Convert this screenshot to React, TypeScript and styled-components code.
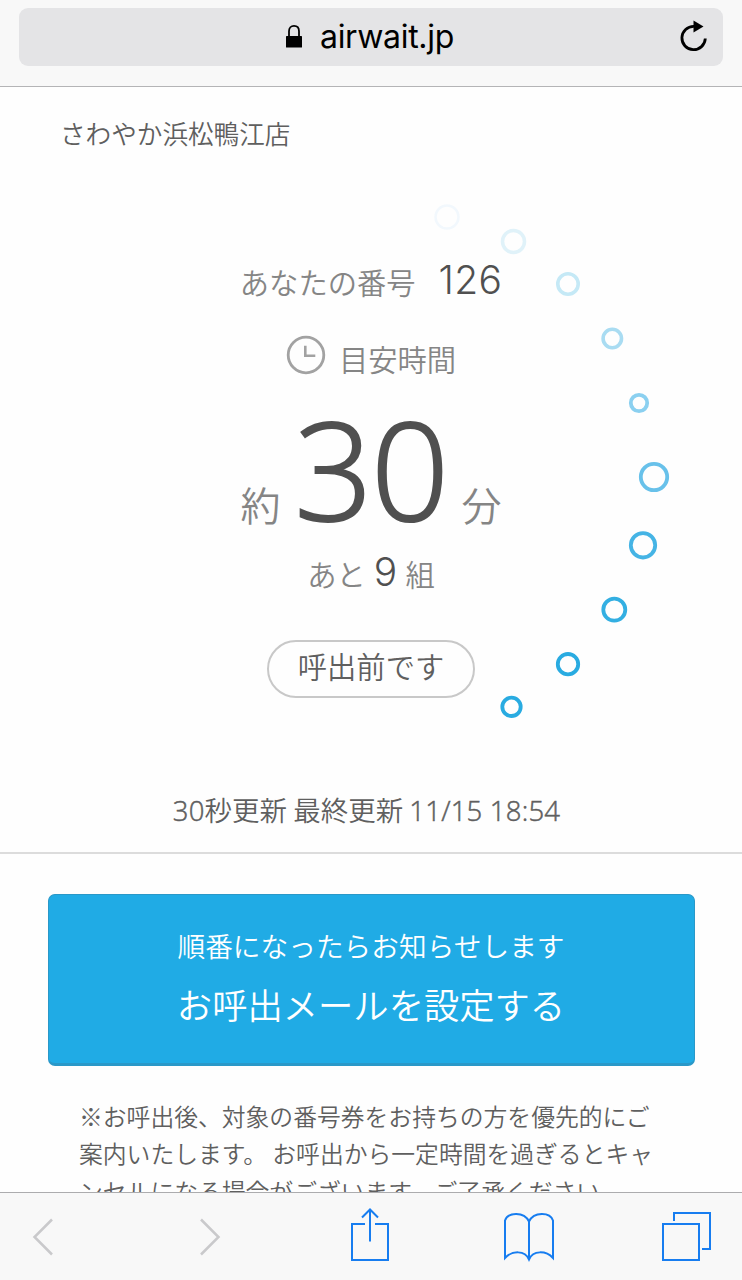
import React from 'react';
import styled, { createGlobalStyle } from 'styled-components';

const GlobalStyle = createGlobalStyle`
  *, *::before, *::after { box-sizing: border-box; }
  body { margin: 0; background: #fefefe; }
`;

const JP = `"Noto Sans CJK JP", sans-serif`;

const Screen = styled.div`
  display: flex;
  flex-direction: column;
  width: 742px;
  height: 1280px;
  overflow: hidden;
  background: #fefefe;
  font-family: ${JP};
  font-weight: 350;
  color: #5f5f5f;
  white-space: nowrap;
`;

const BrowserBar = styled.header`
  flex: none;
  height: 87px;
  padding: 8px 19px 0;
  background: #f8f8f8;
  border-bottom: 1px solid #b4b4b6;
`;

const AddressField = styled.div`
  display: grid;
  grid-template-columns: 266px 1fr 46px;
  align-items: center;
  height: 58px;
  border-radius: 9px;
  background: #e4e4e6;
`;

const Address = styled.div`
  grid-column: 2;
  display: flex;
  align-items: center;
  gap: 17px;
  color: #000;
`;

const Domain = styled.span`
  font: 400 32px/40px Inter, sans-serif;
  letter-spacing: -0.3px;
`;

const Page = styled.main`
  flex: 1;
  min-height: 0;
  overflow: hidden;
`;

const Status = styled.section`
  position: relative;
  display: flex;
  flex-direction: column;
  align-items: center;
  height: 767px;
  border-bottom: 2px solid #dcdcdc;
`;

const ShopName = styled.h1`
  align-self: flex-start;
  margin: 27px 0 0 60px;
  font-size: 25.6px;
  line-height: 38px;
  font-weight: 350;
`;

const Line = styled.div<{ $top: number; $height: number; $gap: number }>`
  display: flex;
  align-items: baseline;
  gap: ${(p) => p.$gap}px;
  height: ${(p) => p.$height}px;
  line-height: ${(p) => p.$height}px;
  margin-top: ${(p) => p.$top}px;
`;

const Label = styled.span<{ $size?: number }>`
  font-size: ${(p) => p.$size ?? 29.3}px;
  line-height: 1.2;
  color: #858585;
`;

const Figure = styled.span`
  font-family: Inter, sans-serif;
  font-size: 39px;
  font-weight: 300;
  letter-spacing: 0.3px;
  color: #505050;
`;

const Minutes = styled.span`
  font-family: "Open Sans", sans-serif;
  font-size: 137px;
  font-weight: 350;
  letter-spacing: -1.8px;
  color: #505050;
  -webkit-text-stroke: 2.2px #505050;
`;

const ClockSlot = styled.span`
  align-self: center;
  display: flex;
  margin-top: -10.5px;
`;

const Pill = styled.div`
  width: 208px;
  height: 58px;
  margin-top: 46px;
  border: 2px solid #c8c8c8;
  border-radius: 29px;
  text-align: center;
  font-size: 29.3px;
  line-height: 47px;
`;

const Updated = styled.p`
  margin: 91px 9px 0 0;
  font-size: 27.5px;
  line-height: 40px;
`;

const Digits = styled.span`
  font-family: "Open Sans", sans-serif;
  letter-spacing: 0.2px;
  -webkit-text-stroke: 0.5px #5f5f5f;
`;

const Trail = styled.svg`
  position: absolute;
  left: 420px;
  top: 103px;
`;

const MailButton = styled.button`
  display: flex;
  flex-direction: column;
  align-items: center;
  width: 647px;
  height: 172px;
  margin: 40px 0 0 47.5px;
  padding: 29px 0 0;
  border: 1px solid #2a98c8;
  border-bottom-width: 3px;
  border-radius: 7px;
  background: #20abe5;
  color: #fff;
  font-family: ${JP};
  font-weight: 350;
`;

const ButtonNote = styled.span`
  font-size: 27.7px;
  line-height: 42px;
`;

const ButtonTitle = styled.span`
  margin-top: 10px;
  font-size: 35.3px;
  line-height: 56px;
`;

const Notice = styled.p`
  margin: 31px 0 0 79px;
  font-size: 23.8px;
  line-height: 37.4px;
`;

const Toolbar = styled.nav`
  flex: none;
  display: grid;
  grid-template-columns: 167px 151px 153px 157.5px auto;
  align-items: start;
  height: 88px;
  padding: 14px 0 0 32px;
  border-top: 1px solid #acacae;
  background: #f8f8f8;
`;

const trail = [
  { x: 447, y: 217, r: 11.5, w: 2.5, c: '#f2f8fd' },
  { x: 513.5, y: 241.5, r: 11, w: 3.5, c: '#e0f2f9' },
  { x: 568, y: 284, r: 10.2, w: 3.6, c: '#c5e9f6' },
  { x: 612.3, y: 338.5, r: 9.2, w: 3.6, c: '#a9dcf2' },
  { x: 639, y: 403, r: 8.2, w: 3.8, c: '#8bd0f0' },
  { x: 654, y: 477, r: 13.2, w: 3.8, c: '#68c1ea' },
  { x: 643, y: 545.3, r: 12.2, w: 3.8, c: '#45b4e5' },
  { x: 614.3, y: 609.7, r: 11, w: 3.8, c: '#33afe2' },
  { x: 568, y: 664.2, r: 10.2, w: 3.8, c: '#29abe1' },
  { x: 511.5, y: 706.8, r: 9.2, w: 3.8, c: '#29abe1' },
];

const Lock = () => (
  <svg width="18" height="26" viewBox="0 0 18 26">
    <rect x="1" y="12" width="16" height="11.5" rx="0.6" fill="#000" />
    <path d="M4 12V7.2C4 3.8 6 1.9 9 1.9s5 1.9 5 5.3V12" fill="none" stroke="#000" strokeWidth="1.8" />
  </svg>
);

const Reload = () => (
  <svg width="32" height="36" viewBox="0 0 32 36">
    <path d="M17 7.3A11.7 11.7 0 1 0 28.3 19.5" fill="none" stroke="#000" strokeWidth="2.8" />
    <path d="M16.5 1.5L26.5 7.5L16.5 13.5Z" fill="#000" />
  </svg>
);

const Clock = () => (
  <svg width="40" height="40" viewBox="0 0 40 40" fill="none" stroke="#a2a2a2">
    <circle cx="20" cy="20" r="17.8" strokeWidth="2.8" />
    <path d="M19.3 10.8V20.8H29.3" strokeWidth="2.6" />
  </svg>
);

const Chevron = ({ forward = false }: { forward?: boolean }) => (
  <svg width="22" height="62" viewBox="0 0 22 62" fill="none" stroke="#c9c9cb" strokeWidth="2.5">
    <path d={forward ? 'M2 12.5L19.5 30L2 47.5' : 'M20 12.5L2.5 30L20 47.5'} />
  </svg>
);

const Share = () => (
  <svg width="40" height="60" viewBox="0 0 40 60" fill="none" stroke="#177df0" strokeWidth="2">
    <path d="M15 17H2V53H38V17H25M20 3V34.5M12 10.5L20 2.5L28 10.5" />
  </svg>
);

const Book = () => (
  <svg width="52" height="60" viewBox="0 0 52 60" fill="none" stroke="#177df0" strokeWidth="2">
    <path d="M26 14.5C21 4.5 5 5 2 13.5V51C9 43.5 22 43 26 52.5C30 43 43 43.5 50 51V13.5C47 5 31 4.5 26 14.5V52.5" />
  </svg>
);

const Tabs = () => (
  <svg width="50" height="60" viewBox="0 0 50 60" fill="none" stroke="#177df0" strokeWidth="2">
    <path d="M2 17H38V53H2ZM13 14V6H49V42H41" />
  </svg>
);

export default function App() {
  return (
    <Screen>
      <GlobalStyle />
      <BrowserBar>
        <AddressField>
          <Address>
            <Lock />
            <Domain>airwait.jp</Domain>
          </Address>
          <Reload />
        </AddressField>
      </BrowserBar>
      <Page>
        <Status>
          <ShopName>さわやか浜松鴨江店</ShopName>
          <Line $top={106} $height={44} $gap={23}>
            <Label>あなたの番号</Label>
            <Figure>126</Figure>
          </Line>
          <Line $top={38.5} $height={38.5} $gap={13}>
            <ClockSlot><Clock /></ClockSlot>
            <Label>目安時間</Label>
          </Line>
          <Line $top={24} $height={130} $gap={14}>
            <Label $size={40}>約</Label>
            <Minutes>30</Minutes>
            <Label $size={40}>分</Label>
          </Line>
          <Line $top={17} $height={44} $gap={8}>
            <Label>あと</Label>
            <Figure>9</Figure>
            <Label>組</Label>
          </Line>
          <Pill>呼出前です</Pill>
          <Updated>
            <Digits>30</Digits>秒更新 最終更新 <Digits>11/15 18:54</Digits>
          </Updated>
          <Trail width="260" height="540" viewBox="420 190 260 540" fill="none">
            {trail.map((d) => (
              <circle key={d.y} cx={d.x} cy={d.y} r={d.r} stroke={d.c} strokeWidth={d.w} />
            ))}
          </Trail>
        </Status>
        <MailButton>
          <ButtonNote>順番になったらお知らせします</ButtonNote>
          <ButtonTitle>お呼出メールを設定する</ButtonTitle>
        </MailButton>
        <Notice>
          ※お呼出後、対象の番号券をお持ちの方を優先的にご<br />
          案内いたします。 お呼出から一定時間を過ぎるとキャ<br />
          ンセルになる場合がございます。ご了承ください。
        </Notice>
      </Page>
      <Toolbar>
        <Chevron />
        <Chevron forward />
        <Share />
        <Book />
        <Tabs />
      </Toolbar>
    </Screen>
  );
}
